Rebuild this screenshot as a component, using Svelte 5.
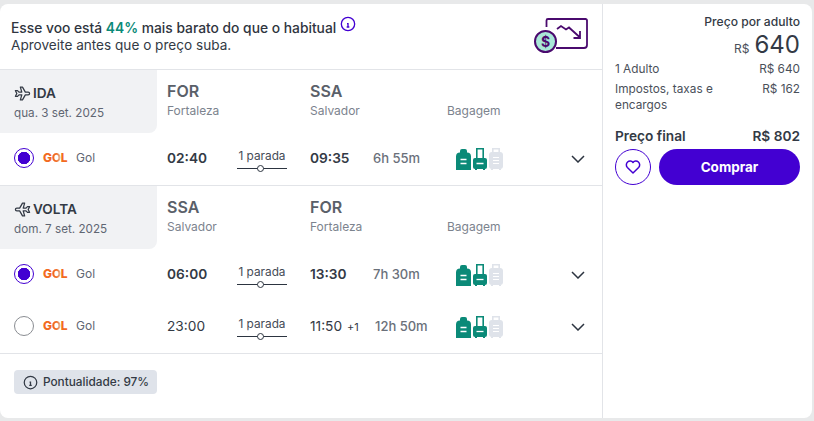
<script>
  const trips = [
    {
      label: "IDA",
      back: false,
      date: "qua. 3 set. 2025",
      from: ["FOR", "Fortaleza"],
      to: ["SSA", "Salvador"],
      flights: [{ sel: true, dep: "02:40", arr: "09:35", plus: "", dur: "6h 55m" }],
    },
    {
      label: "VOLTA",
      back: true,
      date: "dom. 7 set. 2025",
      from: ["SSA", "Salvador"],
      to: ["FOR", "Fortaleza"],
      flights: [
        { sel: true, dep: "06:00", arr: "13:30", plus: "", dur: "7h 30m" },
        { sel: false, dep: "23:00", arr: "11:50", plus: "+1", dur: "12h 50m" },
      ],
    },
  ];
</script>

<div class="card">
  <div class="main">
    <header class="promo">
      <div class="promo-text">
        <p class="promo-title">
          Esse voo está <b>44%</b> mais barato do que o habitual
          <svg class="info" viewBox="0 0 24 24" width="16" height="16" fill="none" stroke="#4300d2" stroke-width="2">
            <circle cx="12" cy="12" r="10" />
            <path d="M12 7.500h.01M10.500 11.500h1.500v5M10 16.500h4" />
          </svg>
        </p>
        <p class="promo-sub">Aproveite antes que o preço suba.</p>
      </div>
      <svg class="promo-icon" viewBox="0 0 54 36" width="54" height="36" fill="none">
        <path d="M12.500 9V2.500a1.500 1.500 0 0 1 1.500-1.500H51.500a1.500 1.500 0 0 1 1.500 1.500V27a3 3 0 0 1-3 3H22" stroke="#4a0a6e" stroke-width="1.800" />
        <path d="M23 11l4-3 5 3.500 3-2 10.500 9.500M46 13v7h-6.500" stroke="#4a0a6e" stroke-width="1.800" />
        <circle cx="11.500" cy="23.500" r="10.500" fill="#a9e8d8" stroke="#4a0a6e" stroke-width="2" />
        <text x="11.500" y="28.500" text-anchor="middle" class="dollar">$</text>
      </svg>
    </header>

    {#each trips as trip}
      <section class="trip">
        <div class="trip-head">
          <div class="tab">
            <div class="tab-title">
              <svg class:back={trip.back} viewBox="0 0 24 24" width="17" height="17" fill="none" stroke="#333a45" stroke-width="1.800" stroke-linejoin="round">
                <path d="M16 10h4a2 2 0 0 1 0 4h-4l-4 7h-3l2-7h-4l-2 2h-3l2-4-2-4h3l2 2h4l-2-7h3z" />
              </svg>
              {trip.label}
            </div>
            <div class="tab-date">{trip.date}</div>
          </div>
          <div class="place from">
            <strong>{trip.from[0]}</strong>
            <span>{trip.from[1]}</span>
          </div>
          <div class="place to">
            <strong>{trip.to[0]}</strong>
            <span>{trip.to[1]}</span>
          </div>
          <div class="place bag-label"><span>Bagagem</span></div>
        </div>

        {#each trip.flights as f}
          <div class="flight" class:selected={f.sel}>
            <span class="radio"></span>
            <span class="logo">G<i>O</i>L</span>
            <span class="airline">Gol</span>
            <span class="time dep">{f.dep}</span>
            <div class="stops">
              <span>1 parada</span>
              <div class="line"><i></i></div>
            </div>
            <span class="time arr">{f.arr}{#if f.plus}<small>{f.plus}</small>{/if}</span>
            <span class="dur" class:shifted={f.plus}>{f.dur}</span>
            <svg class="bags" viewBox="0 0 48 22" width="48" height="22">
              <path fill="#0b8a78" d="M4 4.500V3a2 2 0 0 1 2-2h3a2 2 0 0 1 2 2v1.500A4 4 0 0 1 15 8.500V22H0V8.500a4 4 0 0 1 4-4z" />
              <path stroke="#fff" stroke-width="1.300" d="M4.500 11.500h6M4.500 15.500h6" />
              <path fill="none" stroke="#0b8a78" stroke-width="1.600" d="M20.800 10V.8h6.400V10" />
              <rect fill="#0b8a78" x="17" y="10" width="14" height="11" rx="2" />
              <path stroke="#0b8a78" stroke-width="2" d="M20 21v1M28 21v1" />
              <path stroke="#fff" stroke-width="1.300" d="M20.500 15.500h7" />
              <path fill="none" stroke="#dfe3ea" stroke-width="1.600" d="M36.800 5V.8h6.400V5" />
              <rect fill="#dfe3ea" x="33" y="4" width="14" height="17" rx="3" />
              <path stroke="#dfe3ea" stroke-width="2" d="M36 21v1M44 21v1" />
              <path stroke="#fff" stroke-width="1.100" d="M37 9.500h6M37 12.500h6M37 15.500h6" />
            </svg>
            <svg class="chev" viewBox="0 0 14 8" width="14" height="8" fill="none" stroke="#2c3440" stroke-width="1.500">
              <path d="M1 1l6 6 6-6" />
            </svg>
          </div>
        {/each}
      </section>
    {/each}

    <footer class="foot">
      <div class="badge">
        <svg viewBox="0 0 24 24" width="15" height="15" fill="none" stroke="#333a45" stroke-width="2">
          <circle cx="12" cy="12" r="10" />
          <path d="M12 7.500h.01M10.500 11.500h1.500v5M10 16.500h4" />
        </svg>
        Pontualidade: 97%
      </div>
    </footer>
  </div>

  <aside class="side">
    <div class="per">Preço por adulto</div>
    <div class="big"><small>R$</small>640</div>
    <div class="line-item"><span>1 Adulto</span><span>R$ 640</span></div>
    <div class="line-item tax"><span>Impostos, taxas e encargos</span><span>R$ 162</span></div>
    <div class="total"><span>Preço final</span><span>R$ 802</span></div>
    <div class="actions">
      <button class="fav" aria-label="Favoritar">
        <svg viewBox="0 0 24 24" width="18" height="18" fill="none" stroke="#4300d2" stroke-width="2" stroke-linejoin="round">
          <path d="M19.500 12.600L12 20l-7.500-7.400a5 5 0 1 1 7.500-6.600 5 5 0 1 1 7.500 6.600z" />
        </svg>
      </button>
      <button class="buy">Comprar</button>
    </div>
  </aside>
</div>

<style>
  :global(body) {
    margin: 0;
    background: #e8e9ea;
  }

  .card {
    display: flex;
    width: 812px;
    height: 414px;
    margin-top: 4px;
    background: #fff;
    border-radius: 8px;
    font-family: "Inter", "Liberation Sans", sans-serif;
    color: #333a45;
    overflow: hidden;
  }

  .main {
    width: 602px;
    border-right: 1px solid #e2e4e8;
    flex-shrink: 0;
  }

  .promo {
    display: flex;
    justify-content: space-between;
    height: 65px;
    padding: 0 14px 0 11px;
    border-bottom: 1px solid #e2e4e8;
  }

  .promo p {
    margin: 0;
  }

  .promo-text {
    padding-top: 12px;
  }

  .promo-title {
    font-size: 13.800px;
    font-weight: 500;
    line-height: 18px;
    color: #2f3540;
    white-space: nowrap;
  }

  .promo-title b {
    color: #0b8a78;
    font-weight: 600;
  }

  .info {
    vertical-align: 1px;
  }

  .promo .promo-sub {
    margin-top: -1px;
    font-size: 13.600px;
    line-height: 18px;
  }

  .promo-icon {
    margin-top: 14px;
  }

  .dollar {
    font: 700 14px "Inter", sans-serif;
    fill: #4a0a6e;
  }

  .trip {
    border-bottom: 1px solid #e2e4e8;
  }

  .trip-head {
    display: grid;
    grid-template-columns: 157px 153px 137px 1fr;
    height: 63px;
  }

  .tab {
    background: #f1f2f4;
    border-radius: 0 0 8px 0;
    padding: 14px 0 0 14px;
  }

  .tab-title {
    display: flex;
    align-items: center;
    gap: 2px;
    font-size: 13.600px;
    font-weight: 600;
    line-height: 19px;
    color: #333a45;
  }

  .tab-title .back {
    transform: scaleX(-1);
  }

  .tab-date {
    margin-top: 2px;
    font-size: 11.700px;
    line-height: 16px;
    color: #5f6672;
    white-space: nowrap;
  }

  .place {
    display: flex;
    flex-direction: column;
    padding-top: 11px;
  }

  .from {
    padding-left: 10px;
  }

  .place strong {
    font-size: 16px;
    font-weight: 600;
    line-height: 20px;
    color: #5a6069;
  }

  .place span {
    margin-top: 1px;
    font-size: 12px;
    line-height: 18px;
    color: #7c838e;
  }

  .bag-label {
    padding-top: 31px;
  }

  .flight {
    display: grid;
    grid-template-columns: 20px 33px 100px 70px 73px 63px 83px 1fr 14px;
    align-items: center;
    height: 52px;
    padding: 0 17px 3px 14px;
    box-sizing: border-box;
  }

  .radio {
    box-sizing: border-box;
    width: 20px;
    height: 20px;
    border: 1px solid #8a8d92;
    border-radius: 50%;
  }

  .selected .radio {
    border-color: #4300d2;
    background: radial-gradient(circle, #4300d2 0 6px, #fff 6.500px);
  }

  .logo {
    margin-left: 9px;
    font-size: 12px;
    font-weight: 800;
    letter-spacing: -0.3px;
    color: #f26a21;
  }

  .logo i {
    font-style: normal;
    background: linear-gradient(90deg, #f26a21 50%, #dcc9bd 100%);
    -webkit-background-clip: text;
    background-clip: text;
    color: transparent;
  }

  .airline {
    padding-left: 9px;
    font-size: 12px;
    color: #5f6672;
  }

  .time {
    font-size: 13.700px;
    color: #333a45;
  }

  .selected .time {
    font-weight: 600;
  }

  .arr small {
    margin-left: 5px;
    font-size: 11px;
    font-weight: 400;
  }

  .dur {
    font-size: 13px;
    font-weight: 500;
    color: #6a707a;
  }

  .dur.shifted {
    margin-left: 2px;
  }

  .stops {
    width: 50px;
    margin-top: 3px;
    font-size: 11.800px;
    text-align: center;
    color: #444b56;
    white-space: nowrap;
  }

  .line {
    position: relative;
    height: 1px;
    margin-top: 5px;
    background: #2c3440;
  }

  .line i {
    position: absolute;
    left: 20px;
    top: -3px;
    width: 5px;
    height: 5px;
    background: #fff;
    border: 1px solid #2c3440;
    border-radius: 50%;
  }

  .bags {
    margin-top: 3px;
  }

  .chev {
    margin-top: 2px;
  }

  .foot {
    padding: 16px 14px;
  }

  .badge {
    display: inline-flex;
    align-items: center;
    gap: 5px;
    height: 24px;
    padding: 0 8px 0 9px;
    background: #dfe3ea;
    border-radius: 4px;
    font-size: 11.800px;
    font-weight: 500;
    color: #333a45;
  }

  .side {
    flex: 1;
    padding: 10px 12px 0 12px;
    font-size: 12px;
    color: #4a505a;
  }

  .per {
    text-align: right;
    font-weight: 500;
    font-size: 12.100px;
    line-height: 16px;
    color: #333a45;
  }

  .big {
    text-align: right;
    font-size: 24px;
    line-height: 30px;
    color: #333a45;
  }

  .big small {
    margin-right: 5px;
    font-size: 12px;
    line-height: 1;
    color: #4a505a;
  }

  .line-item {
    display: flex;
    justify-content: space-between;
    line-height: 16px;
    margin-top: 1px;
    font-size: 11.800px;
  }

  .tax {
    margin-top: 4px;
  }

  .tax span:first-child {
    width: 110px;
  }

  .total {
    display: flex;
    justify-content: space-between;
    margin-top: 14px;
    font-size: 13.700px;
    font-weight: 600;
    line-height: 18px;
    color: #333a45;
  }

  .actions {
    display: flex;
    gap: 8px;
    margin-top: 4px;
  }

  .fav,
  .buy {
    height: 36px;
    border-radius: 18px;
    padding: 0;
    font-family: inherit;
  }

  .fav {
    width: 36px;
    flex-shrink: 0;
    display: flex;
    align-items: center;
    justify-content: center;
    background: #fff;
    border: 1px solid #4300d2;
  }

  .buy {
    flex: 1;
    border: 0;
    background: #4300d2;
    color: #fff;
    font-size: 13.500px;
    font-weight: 700;
  }
</style>
